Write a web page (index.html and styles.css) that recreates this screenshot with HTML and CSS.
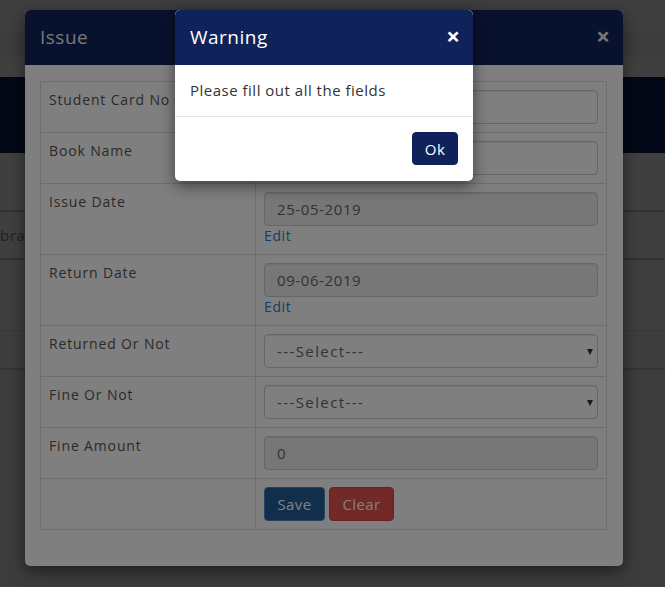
FILE: index.html
```html
<!DOCTYPE html>
<html lang="en">
<head>
  <meta charset="UTF-8" />
  <title>Library - Issue</title>
  <link rel="stylesheet" href="styles.css">
</head>
<body>
  <div class="screen">
    <!-- page behind the dialogs -->
    <div class="page">
      <div class="topbar"></div>
      <div class="subbar"></div>
      <div class="crumb"></div>
      <div class="banner"></div>
      <div class="spacer"></div>
      <div class="list-row list-row-first"><span class="list-text">brary</span></div>
      <div class="list-row list-row-tall"></div>
      <div class="list-row list-row-short"></div>
      <div class="list-rest"></div>
    </div>

    <div class="backdrop"></div>

    <!-- Issue modal -->
    <div class="modal modal-issue">
      <div class="modal-header">
        <span class="modal-title">Issue</span>
        <span class="close close-dim">&times;</span>
      </div>
      <div class="modal-body">
        <table class="issue-table">
          <tr>
            <td class="label-cell">Student Card No</td>
            <td><input class="form-control" type="text" value=""></td>
          </tr>
          <tr>
            <td class="label-cell">Book Name</td>
            <td><input class="form-control" type="text" value=""></td>
          </tr>
          <tr>
            <td class="label-cell">Issue Date</td>
            <td>
              <input class="form-control readonly" type="text" value="25-05-2019" readonly>
              <a class="edit-link" href="#">Edit</a>
            </td>
          </tr>
          <tr>
            <td class="label-cell">Return Date</td>
            <td>
              <input class="form-control readonly" type="text" value="09-06-2019" readonly>
              <a class="edit-link" href="#">Edit</a>
            </td>
          </tr>
          <tr>
            <td class="label-cell">Returned Or Not</td>
            <td>
              <div class="select-wrap">
                <select class="form-control"><option>---Select---</option></select>
              </div>
            </td>
          </tr>
          <tr>
            <td class="label-cell">Fine Or Not</td>
            <td>
              <div class="select-wrap">
                <select class="form-control"><option>---Select---</option></select>
              </div>
            </td>
          </tr>
          <tr>
            <td class="label-cell">Fine Amount</td>
            <td><input class="form-control readonly" type="text" value="0" readonly></td>
          </tr>
          <tr>
            <td class="label-cell"></td>
            <td>
              <div class="btn-row">
                <button class="btn btn-save">Save</button>
                <button class="btn btn-clear">Clear</button>
              </div>
            </td>
          </tr>
        </table>
      </div>
    </div>

    <div class="backdrop"></div>

    <!-- Warning modal -->
    <div class="modal modal-warning">
      <div class="modal-header">
        <span class="modal-title">Warning</span>
        <span class="close">&times;</span>
      </div>
      <div class="warning-body">Please fill out all the fields</div>
      <div class="warning-footer">
        <button class="btn btn-ok">Ok</button>
      </div>
    </div>
  </div>
</body>
</html>
```

FILE: styles.css
```css
* {
  box-sizing: border-box;
}

body {
  margin: 0;
  background: #fff;
  font-family: "Open Sans", "Liberation Sans", Arial, sans-serif;
  font-size: 14px;
  line-height: 20px;
  color: #333;
}

.screen {
  position: relative;
  width: 665px;
  height: 587px;
  overflow: hidden;
}

/* background page */
.page {
  background: #fff;
  height: 100%;
}
.topbar {
  height: 34px;
  background: #fbfbfb;
  border-bottom: 1px solid #e8e8e8;
}
.subbar {
  height: 23px;
  background: #f0f0f0;
}
.crumb {
  height: 20px;
  background: #fff;
}
.banner {
  height: 76px;
  background: #10225a;
}
.spacer {
  height: 57px;
  background: #fff;
}
.list-row {
  border-top: 2px solid #c4c4c4;
  background: #fdfdfd;
}
.list-row-first {
  height: 48px;
  display: flex;
  align-items: center;
}
.list-text {
  font-size: 15px;
  letter-spacing: 0.6px;
  color: #8a8a8a;
}
.list-row-tall {
  height: 72px;
  background: #fbfbfb;
}
.list-row-short {
  height: 38px;
  border-top: 1px solid #ddd;
  background: #f6f6f6;
}
.list-rest {
  border-top: 2px solid #d0d0d0;
  height: 220px;
  background: #f1f1f1;
}

.backdrop {
  position: absolute;
  inset: 0;
  background: rgba(0, 0, 0, 0.5);
}

/* modals */
.modal {
  position: absolute;
  top: 10px;
  background: #fff;
  border-radius: 5px;
  box-shadow: 0 5px 15px rgba(0, 0, 0, 0.5);
  overflow: hidden;
}
.modal-issue {
  left: 25px;
  width: 598px;
}
.modal-warning {
  left: 175px;
  width: 298px;
}

.modal-header {
  height: 55px;
  background: #10225a;
  padding: 0 15px;
  display: flex;
  align-items: center;
  justify-content: space-between;
  border-radius: 5px 5px 0 0;
}
.modal-title {
  font-size: 19px;
  color: #fff;
  letter-spacing: 0.5px;
  margin-top: -2px;
}
.modal-issue .modal-title {
  color: #eee;
}
.close {
  font-size: 24px;
  font-weight: 700;
  color: #fff;
  line-height: 1;
  margin-top: -4px;
  margin-right: -2px;
}
.close-dim {
  color: #eee;
}

.modal-body {
  padding: 16px 16px 36px 15px;
}

/* issue form table */
.issue-table {
  width: 100%;
  border-collapse: collapse;
}
.issue-table td {
  border: 1px solid #ddd;
  padding: 8px;
  vertical-align: top;
}
.label-cell {
  width: 215px;
  color: #555;
  font-size: 14px;
  letter-spacing: 0.85px;
}

.form-control {
  display: block;
  width: 100%;
  height: 34px;
  padding: 6px 12px;
  font-family: inherit;
  font-size: 15px;
  letter-spacing: 0.6px;
  color: #666;
  background: #fff;
  border: 1px solid #ccc;
  border-radius: 4px;
  box-shadow: inset 0 1px 1px rgba(0, 0, 0, 0.075);
}
.form-control.readonly {
  background: #eee;
}
select.form-control {
  appearance: none;
  -webkit-appearance: none;
  letter-spacing: 1.4px;
}
.select-wrap {
  position: relative;
}
.select-wrap::after {
  content: "";
  position: absolute;
  right: 5px;
  top: 15px;
  border-left: 3.5px solid transparent;
  border-right: 3.5px solid transparent;
  border-top: 6px solid #333;
}

.edit-link {
  display: block;
  color: #337ab7;
  text-decoration: none;
  font-size: 14px;
  letter-spacing: 0.6px;
  line-height: 20px;
}

.btn-row {
  display: flex;
  gap: 4px;
}
.btn {
  font-family: inherit;
  font-size: 15px;
  letter-spacing: 0.4px;
  color: #fff;
  height: 34px;
  padding: 0 12px;
  border-radius: 4px;
  border: 1px solid transparent;
  cursor: pointer;
}
.btn-save {
  width: 61px;
  background: #235f9b;
  border-color: #5585bb;
}
.btn-clear {
  width: 65px;
  background: #e4534f;
  border-color: #d43f3a;
}

/* warning dialog */
.warning-body {
  padding: 15px 15px 16px;
  font-size: 15px;
  letter-spacing: 0.5px;
  line-height: 20px;
  color: #333;
  border-bottom: 1px solid #e5e5e5;
}
.warning-footer {
  padding: 15px 15px 16px;
  display: flex;
  justify-content: flex-end;
}
.btn-ok {
  width: 46px;
  height: 33px;
  padding: 0;
  background: #10225a;
  border-color: #10225a;
  font-size: 15px;
}
```
